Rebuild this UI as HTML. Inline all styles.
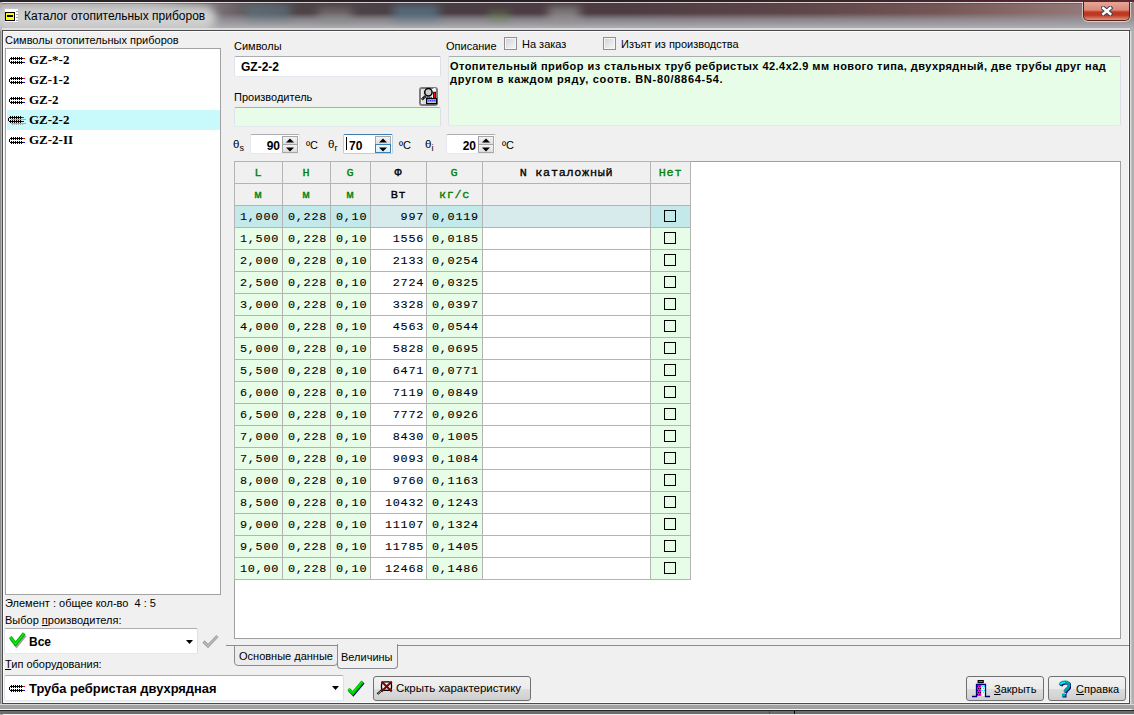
<!DOCTYPE html>
<html><head><meta charset="utf-8">
<style>
*{box-sizing:border-box;margin:0;padding:0}
html,body{width:1134px;height:715px;overflow:hidden;background:#a6a6a8}
body{position:relative;font-family:"Liberation Sans",sans-serif;font-size:11px;color:#000}
.a{position:absolute}
.t{position:absolute;white-space:pre;line-height:13px}
#title{left:0;top:0;width:1134px;height:31px;
 background:linear-gradient(90deg,#a89ea2 0px,#a8a6a8 60px,#a4a2a4 150px,#7a7276 215px,#5e565a 250px,#4e4448 300px,#4a3e44 450px,#4d3c42 620px,#5e464a 800px,#745656 940px,#8c6e6e 1040px,#9a8686 1134px)}
#titleshade{left:0;top:0;width:1134px;height:31px;
 background:linear-gradient(180deg,rgba(150,150,155,0) 0px,rgba(150,150,155,0) 13px,rgba(150,150,156,.75) 19px,rgba(165,165,170,.95) 25px,rgba(175,175,178,1) 28px)}
#client{left:2px;top:30px;width:1128px;height:674px;background:#f0f0f0;border:1px solid #4a4a4a;box-shadow:inset 1px 1px 0 #fcfcfc,inset -1px -1px 0 #fcfcfc}
.box{position:absolute;background:#fff;border:1px solid;border-color:#abadb3 #dbdfe6 #e3e9ef #e2e3ea;border-radius:2px}
.grn{background:#e8fde8}
.chk{position:absolute;width:13px;height:13px;border:1px solid #8f8f8f;box-shadow:inset 0 0 0 1px #f6f6f6;background:linear-gradient(135deg,#cfd2d6,#f8f8f8)}
.spin{position:absolute;background:#fff;border:1px solid #abadb3;font-weight:bold;font-size:12px}
.gl{background:#b4b4b4}
.tc{position:absolute;height:22px;line-height:22px;padding-top:1px;text-align:center;font-family:"Liberation Mono",monospace;font-weight:normal;-webkit-text-stroke:0.35px currentColor;font-size:11.8px;letter-spacing:0.72px;white-space:pre}
.td{position:absolute;height:22px;line-height:22px;padding-top:1px;font-family:"Liberation Mono",monospace;font-weight:normal;-webkit-text-stroke:0.1px #000;font-size:11.8px;letter-spacing:0.72px;white-space:pre}
</style></head><body>
<div id="title" class="a"></div>
<div id="titleshade" class="a"></div>
<div class="a" style="left:246px;top:5px;width:44px;height:13px;background:#5d7a88;filter:blur(5px);opacity:.65"></div>
<div class="a" style="left:318px;top:9px;width:34px;height:14px;background:#909090;filter:blur(5px);opacity:.6"></div>
<div class="a" style="left:393px;top:5px;width:46px;height:15px;background:#5a7e92;filter:blur(5px);opacity:.7"></div>
<div class="a" style="left:488px;top:12px;width:22px;height:8px;background:#6a8a50;filter:blur(4px);opacity:.6"></div>
<div class="a" style="left:548px;top:7px;width:32px;height:15px;background:#9a9a9a;filter:blur(5px);opacity:.7"></div>
<div class="a" style="left:-6px;top:6px;width:222px;height:24px;border-radius:12px;background:#d0d0d0;filter:blur(4px)"></div>
<div class="a" style="left:0;top:0;width:1134px;height:2px;background:linear-gradient(90deg,#2a2228,#2a1e24 600px,#5a2a30 1134px)"></div>
<div class="a" style="left:2px;top:2px;width:1130px;height:1px;background:rgba(255,255,255,.75)"></div>
<div class="a" style="left:2px;top:3px;width:1130px;height:1px;background:rgba(60,60,60,.35)"></div>
<div class="a" style="left:2px;top:28px;width:1128px;height:2px;background:rgba(230,230,232,.8)"></div>
<div class="a" style="left:0;top:31px;width:2px;height:680px;background:linear-gradient(90deg,#8e8e8e 0,#8e8e8e 1px,#b8b8b8 1px)"></div>
<div class="a" style="left:1130px;top:31px;width:4px;height:680px;background:linear-gradient(90deg,#dcdcdc 0,#dcdcdc 1px,#c0c0c0 1px,#c0c0c0 2px,#b0b0b0 2px)"></div>
<div class="a" style="left:0;top:704px;width:1134px;height:5px;background:linear-gradient(180deg,#d8d8d8 0,#d8d8d8 1px,#a2a2a2 1px,#a0a0a0 5px)"></div>
<div class="a" style="left:0;top:709px;width:1132px;height:1px;background:#f4f4f4"></div>
<div class="a" style="left:0;top:710px;width:1134px;height:1px;background:#262626"></div>
<div class="a" style="left:0;top:711px;width:1134px;height:3px;background:#6c6c6c"></div>
<div class="a" style="left:769px;top:711px;width:1px;height:3px;background:#505050"></div>
<div class="a" style="left:794px;top:711px;width:1px;height:3px;background:#000"></div>
<div class="a" style="left:3px;top:714px;width:1131px;height:1px;background:#f0f0f0"></div>
<div id="client" class="a"></div>

<!-- title icon -->
<div class="a" style="left:4px;top:8px;width:15px;height:15px;background:#fff;border:1px solid #c8c8c8;border-radius:1px"></div>
<div class="a" style="left:5px;top:12px;width:10px;height:9px;background:#ffff00;border:1px solid #000"></div>
<div class="a" style="left:7px;top:15px;width:6px;height:2px;background:#000"></div>
<div class="a" style="left:16px;top:11px;width:2px;height:10px;background:repeating-linear-gradient(180deg,#a0a0a0 0,#a0a0a0 1px,#fff 1px,#fff 3px)"></div>
<div class="t" style="left:24px;top:9px;font-size:12px;line-height:14px;color:#000">Каталог отопительных приборов</div>

<!-- close button -->
<div class="a" style="left:1082px;top:2px;width:49px;height:20px;border-radius:0 0 6px 6px;background:rgba(255,255,255,.55)"></div>
<div class="a" style="left:1083px;top:2px;width:47px;height:19px;border:1px solid #5a1f18;border-top:none;border-radius:0 0 5px 5px;background:linear-gradient(180deg,#e9a596 0px,#d88a7a 8px,#c4391e 10px,#b83820 13px,#d07058 16px,#e09680 18px)"></div>
<svg class="a" style="left:1101px;top:6px" width="12" height="10">
 <path d="M2.2 2 L9.3 8 M9.3 2 L2.2 8" stroke="#3a4258" stroke-width="4.4" stroke-linecap="square"/>
 <path d="M2.2 2 L9.3 8 M9.3 2 L2.2 8" stroke="#ffffff" stroke-width="2.4" stroke-linecap="square"/>
</svg>

<!-- left panel -->
<div class="t" style="left:5px;top:34px">Символы отопительных приборов</div>
<div class="box" style="left:5px;top:48px;width:216px;height:547px;border-color:#a2a2a2;border-radius:0"></div>
<div class="a" style="left:7px;top:110px;width:213px;height:20px;background:#c8fafc"></div>

<!-- list -->
<svg width="0" height="0" style="position:absolute"><defs><symbol id="pipe" viewBox="0 0 16 7"><rect x="2" y="0" width="1" height="1" fill="#000"/><rect x="2" y="2" width="1" height="1" fill="#000"/><rect x="2" y="4" width="1" height="1" fill="#000"/><rect x="2" y="6" width="1" height="1" fill="#000"/><rect x="4" y="0" width="1" height="1" fill="#000"/><rect x="4" y="2" width="1" height="1" fill="#000"/><rect x="4" y="4" width="1" height="1" fill="#000"/><rect x="4" y="6" width="1" height="1" fill="#000"/><rect x="6" y="0" width="1" height="1" fill="#000"/><rect x="6" y="2" width="1" height="1" fill="#000"/><rect x="6" y="4" width="1" height="1" fill="#000"/><rect x="6" y="6" width="1" height="1" fill="#000"/><rect x="8" y="0" width="1" height="1" fill="#000"/><rect x="8" y="2" width="1" height="1" fill="#000"/><rect x="8" y="4" width="1" height="1" fill="#000"/><rect x="8" y="6" width="1" height="1" fill="#000"/><rect x="10" y="0" width="1" height="1" fill="#000"/><rect x="10" y="2" width="1" height="1" fill="#000"/><rect x="10" y="4" width="1" height="1" fill="#000"/><rect x="10" y="6" width="1" height="1" fill="#000"/><rect x="12" y="0" width="1" height="1" fill="#000"/><rect x="12" y="2" width="1" height="1" fill="#000"/><rect x="12" y="4" width="1" height="1" fill="#000"/><rect x="12" y="6" width="1" height="1" fill="#000"/><rect x="1" y="1" width="13" height="1" fill="#000"/><rect x="1" y="5" width="13" height="1" fill="#000"/><rect x="0" y="2" width="1" height="3" fill="#000"/><rect x="14" y="1" width="2" height="1" fill="#ff0000"/><rect x="14" y="5" width="2" height="1" fill="#0000ff"/></symbol></defs></svg>
<svg class="a" style="left:9px;top:57px" width="16" height="7"><use href="#pipe"/></svg>
<div class="t" style="left:29px;top:50px;line-height:20px;font-family:'Liberation Serif',serif;font-weight:bold;font-size:13px">GZ-*-2</div>
<svg class="a" style="left:9px;top:77px" width="16" height="7"><use href="#pipe"/></svg>
<div class="t" style="left:29px;top:70px;line-height:20px;font-family:'Liberation Serif',serif;font-weight:bold;font-size:13px">GZ-1-2</div>
<svg class="a" style="left:9px;top:97px" width="16" height="7"><use href="#pipe"/></svg>
<div class="t" style="left:29px;top:90px;line-height:20px;font-family:'Liberation Serif',serif;font-weight:bold;font-size:13px">GZ-2</div>
<svg class="a" style="left:10px;top:118px" width="16" height="7"><g fill="#a8a8a8"><rect x="1" y="1" width="15" height="1"/><rect x="1" y="5" width="15" height="1"/><rect x="2" y="6" width="1" height="1"/><rect x="4" y="6" width="1" height="1"/><rect x="6" y="6" width="1" height="1"/><rect x="8" y="6" width="1" height="1"/><rect x="10" y="6" width="1" height="1"/><rect x="12" y="6" width="1" height="1"/></g></svg>
<svg class="a" style="left:8px;top:116px" width="16" height="7"><use href="#pipe"/></svg>
<div class="t" style="left:29px;top:110px;line-height:20px;font-family:'Liberation Serif',serif;font-weight:bold;font-size:13px">GZ-2-2</div>
<svg class="a" style="left:9px;top:137px" width="16" height="7"><use href="#pipe"/></svg>
<div class="t" style="left:29px;top:130px;line-height:20px;font-family:'Liberation Serif',serif;font-weight:bold;font-size:13px">GZ-2-II</div>
<!-- /list -->
<div class="t" style="left:5px;top:597px">Элемент : общее кол-во  4 : 5</div>
<div class="t" style="left:5px;top:614px">Выбор <u>п</u>роизводителя:</div>
<div class="box" style="left:4px;top:628px;width:194px;height:26px"></div>
<div class="t" style="left:29px;top:636px;font-weight:bold;font-size:12px">Все</div>
<div class="t" style="left:5px;top:658px"><u>Т</u>ип оборудования:</div>
<div class="box" style="left:4px;top:675px;width:340px;height:26px"></div>
<div class="t" style="left:29px;top:682px;font-weight:bold;font-size:12.9px">Труба ребристая двухрядная</div>

<!-- top right -->
<div class="t" style="left:234px;top:40px">Символы</div>
<div class="box" style="left:234px;top:56px;width:207px;height:21px"></div>
<div class="t" style="left:241px;top:61px;font-weight:bold;font-size:12px">GZ-2-2</div>
<div class="t" style="left:234px;top:91px">Производитель</div>
<div class="box grn" style="left:234px;top:107px;width:207px;height:20px"></div>

<div class="t" style="left:446px;top:40px">Описание</div>
<div class="chk" style="left:504px;top:37px"></div>
<div class="t" style="left:522px;top:38px">На заказ</div>
<div class="chk" style="left:603px;top:37px"></div>
<div class="t" style="left:621px;top:38px">Изъят из производства</div>
<div class="box grn" style="left:448px;top:56px;width:673px;height:70px"></div>
<div class="t" style="left:450px;top:60px;font-weight:bold;letter-spacing:0.45px">Отопительный прибор из стальных труб ребристых 42.4x2.9 мм нового типа, двухрядный, две трубы друг над</div>
<div class="t" style="left:450px;top:73px;font-weight:bold;letter-spacing:0.7px">другом в каждом ряду, соотв. BN-80/8864-54.</div>

<!-- grid panel -->
<div class="box" style="left:234px;top:161px;width:887px;height:478px;border-color:#a0a0a0;border-radius:0"></div>

<!-- spin -->
<div class="t" style="left:233px;top:137.5px;font-size:11.5px">θ<span style="font-size:9px;position:relative;top:3px">s</span></div>
<div class="a" style="left:250px;top:134px;width:50px;height:20px;background:#fff;border:1px solid #e3e9ef;border-top-color:#abadb3;border-radius:2px"></div>
<div class="a" style="left:282px;top:136px;width:16px;height:9px;border:1px solid #a6a6a6;background:linear-gradient(180deg,#f4f4f4,#dedede)"></div>
<div class="a" style="left:282px;top:144px;width:16px;height:9px;border:1px solid #a6a6a6;background:linear-gradient(180deg,#f4f4f4,#dedede)"></div>
<svg class="a" style="left:286px;top:138px" width="8" height="5"><path d="M0 4.5 L4 0.5 L8 4.5Z" fill="#000"/></svg>
<svg class="a" style="left:286px;top:146.5px" width="8" height="5"><path d="M0 0.5 L4 4.5 L8 0.5Z" fill="#000"/></svg>
<div class="t" style="left:250px;top:138.5px;width:30px;text-align:right;font-weight:bold;font-size:12px;line-height:14px">90</div>
<div class="t" style="left:306px;top:139px;font-size:11px">ºC</div>
<div class="t" style="left:328px;top:137.5px;font-size:11.5px">θ<span style="font-size:9px;position:relative;top:3px">r</span></div>
<div class="a" style="left:343px;top:134px;width:50px;height:20px;background:#fff;border:1px solid #b5cfe7;border-top-color:#3d7bad;border-radius:2px"></div>
<div class="a" style="left:375px;top:136px;width:16px;height:9px;border:1px solid #a6a6a6;background:linear-gradient(180deg,#f4f4f4,#dedede)"></div>
<div class="a" style="left:375px;top:144px;width:16px;height:9px;border:1px solid #3c7fb1;background:linear-gradient(180deg,#eaf6fd,#d9f0fc)"></div>
<svg class="a" style="left:379px;top:138px" width="8" height="5"><path d="M0 4.5 L4 0.5 L8 4.5Z" fill="#000"/></svg>
<svg class="a" style="left:379px;top:146.5px" width="8" height="5"><path d="M0 0.5 L4 4.5 L8 0.5Z" fill="#000"/></svg>
<div class="t" style="left:349px;top:138.5px;font-weight:bold;font-size:12px;line-height:14px">70</div>
<div class="a" style="left:346px;top:137px;width:1px;height:13px;background:#000"></div>
<div class="t" style="left:399px;top:139px;font-size:11px">ºC</div>
<div class="t" style="left:425px;top:137.5px;font-size:11.5px">θ<span style="font-size:9px;position:relative;top:3px">i</span></div>
<div class="a" style="left:446px;top:134px;width:50px;height:20px;background:#fff;border:1px solid #e3e9ef;border-top-color:#abadb3;border-radius:2px"></div>
<div class="a" style="left:478px;top:136px;width:16px;height:9px;border:1px solid #a6a6a6;background:linear-gradient(180deg,#f4f4f4,#dedede)"></div>
<div class="a" style="left:478px;top:144px;width:16px;height:9px;border:1px solid #a6a6a6;background:linear-gradient(180deg,#f4f4f4,#dedede)"></div>
<svg class="a" style="left:482px;top:138px" width="8" height="5"><path d="M0 4.5 L4 0.5 L8 4.5Z" fill="#000"/></svg>
<svg class="a" style="left:482px;top:146.5px" width="8" height="5"><path d="M0 0.5 L4 4.5 L8 0.5Z" fill="#000"/></svg>
<div class="t" style="left:446px;top:138.5px;width:30px;text-align:right;font-weight:bold;font-size:12px;line-height:14px">20</div>
<div class="t" style="left:502px;top:139px;font-size:11px">ºC</div>
<!-- /spin -->

<!-- table -->
<div class="a" style="left:234px;top:161px;width:48px;height:44px;background:#f0f0f0"></div>
<div class="a" style="left:282px;top:161px;width:48px;height:44px;background:#f0f0f0"></div>
<div class="a" style="left:330px;top:161px;width:40px;height:44px;background:#f0f0f0"></div>
<div class="a" style="left:370px;top:161px;width:56px;height:44px;background:#f0f0f0"></div>
<div class="a" style="left:426px;top:161px;width:56px;height:44px;background:#f0f0f0"></div>
<div class="a" style="left:482px;top:161px;width:168px;height:44px;background:#f0f0f0"></div>
<div class="a" style="left:650px;top:161px;width:40px;height:44px;background:#f0f0f0"></div>
<div class="a" style="left:234px;top:205px;width:48px;height:22px;background:#c4e9eb"></div>
<div class="a" style="left:282px;top:205px;width:48px;height:22px;background:#c4e9eb"></div>
<div class="a" style="left:330px;top:205px;width:40px;height:22px;background:#c4e9eb"></div>
<div class="a" style="left:370px;top:205px;width:56px;height:22px;background:#d7ebed"></div>
<div class="a" style="left:426px;top:205px;width:56px;height:22px;background:#c4e9eb"></div>
<div class="a" style="left:482px;top:205px;width:168px;height:22px;background:#d7ebed"></div>
<div class="a" style="left:650px;top:205px;width:40px;height:22px;background:#c4e9eb"></div>
<div class="a" style="left:234px;top:227px;width:48px;height:22px;background:#e8fde8"></div>
<div class="a" style="left:282px;top:227px;width:48px;height:22px;background:#e8fde8"></div>
<div class="a" style="left:330px;top:227px;width:40px;height:22px;background:#e8fde8"></div>
<div class="a" style="left:370px;top:227px;width:56px;height:22px;background:#ffffff"></div>
<div class="a" style="left:426px;top:227px;width:56px;height:22px;background:#e8fde8"></div>
<div class="a" style="left:482px;top:227px;width:168px;height:22px;background:#ffffff"></div>
<div class="a" style="left:650px;top:227px;width:40px;height:22px;background:#e8fde8"></div>
<div class="a" style="left:234px;top:249px;width:48px;height:22px;background:#e8fde8"></div>
<div class="a" style="left:282px;top:249px;width:48px;height:22px;background:#e8fde8"></div>
<div class="a" style="left:330px;top:249px;width:40px;height:22px;background:#e8fde8"></div>
<div class="a" style="left:370px;top:249px;width:56px;height:22px;background:#ffffff"></div>
<div class="a" style="left:426px;top:249px;width:56px;height:22px;background:#e8fde8"></div>
<div class="a" style="left:482px;top:249px;width:168px;height:22px;background:#ffffff"></div>
<div class="a" style="left:650px;top:249px;width:40px;height:22px;background:#e8fde8"></div>
<div class="a" style="left:234px;top:271px;width:48px;height:22px;background:#e8fde8"></div>
<div class="a" style="left:282px;top:271px;width:48px;height:22px;background:#e8fde8"></div>
<div class="a" style="left:330px;top:271px;width:40px;height:22px;background:#e8fde8"></div>
<div class="a" style="left:370px;top:271px;width:56px;height:22px;background:#ffffff"></div>
<div class="a" style="left:426px;top:271px;width:56px;height:22px;background:#e8fde8"></div>
<div class="a" style="left:482px;top:271px;width:168px;height:22px;background:#ffffff"></div>
<div class="a" style="left:650px;top:271px;width:40px;height:22px;background:#e8fde8"></div>
<div class="a" style="left:234px;top:293px;width:48px;height:22px;background:#e8fde8"></div>
<div class="a" style="left:282px;top:293px;width:48px;height:22px;background:#e8fde8"></div>
<div class="a" style="left:330px;top:293px;width:40px;height:22px;background:#e8fde8"></div>
<div class="a" style="left:370px;top:293px;width:56px;height:22px;background:#ffffff"></div>
<div class="a" style="left:426px;top:293px;width:56px;height:22px;background:#e8fde8"></div>
<div class="a" style="left:482px;top:293px;width:168px;height:22px;background:#ffffff"></div>
<div class="a" style="left:650px;top:293px;width:40px;height:22px;background:#e8fde8"></div>
<div class="a" style="left:234px;top:315px;width:48px;height:22px;background:#e8fde8"></div>
<div class="a" style="left:282px;top:315px;width:48px;height:22px;background:#e8fde8"></div>
<div class="a" style="left:330px;top:315px;width:40px;height:22px;background:#e8fde8"></div>
<div class="a" style="left:370px;top:315px;width:56px;height:22px;background:#ffffff"></div>
<div class="a" style="left:426px;top:315px;width:56px;height:22px;background:#e8fde8"></div>
<div class="a" style="left:482px;top:315px;width:168px;height:22px;background:#ffffff"></div>
<div class="a" style="left:650px;top:315px;width:40px;height:22px;background:#e8fde8"></div>
<div class="a" style="left:234px;top:337px;width:48px;height:22px;background:#e8fde8"></div>
<div class="a" style="left:282px;top:337px;width:48px;height:22px;background:#e8fde8"></div>
<div class="a" style="left:330px;top:337px;width:40px;height:22px;background:#e8fde8"></div>
<div class="a" style="left:370px;top:337px;width:56px;height:22px;background:#ffffff"></div>
<div class="a" style="left:426px;top:337px;width:56px;height:22px;background:#e8fde8"></div>
<div class="a" style="left:482px;top:337px;width:168px;height:22px;background:#ffffff"></div>
<div class="a" style="left:650px;top:337px;width:40px;height:22px;background:#e8fde8"></div>
<div class="a" style="left:234px;top:359px;width:48px;height:22px;background:#e8fde8"></div>
<div class="a" style="left:282px;top:359px;width:48px;height:22px;background:#e8fde8"></div>
<div class="a" style="left:330px;top:359px;width:40px;height:22px;background:#e8fde8"></div>
<div class="a" style="left:370px;top:359px;width:56px;height:22px;background:#ffffff"></div>
<div class="a" style="left:426px;top:359px;width:56px;height:22px;background:#e8fde8"></div>
<div class="a" style="left:482px;top:359px;width:168px;height:22px;background:#ffffff"></div>
<div class="a" style="left:650px;top:359px;width:40px;height:22px;background:#e8fde8"></div>
<div class="a" style="left:234px;top:381px;width:48px;height:22px;background:#e8fde8"></div>
<div class="a" style="left:282px;top:381px;width:48px;height:22px;background:#e8fde8"></div>
<div class="a" style="left:330px;top:381px;width:40px;height:22px;background:#e8fde8"></div>
<div class="a" style="left:370px;top:381px;width:56px;height:22px;background:#ffffff"></div>
<div class="a" style="left:426px;top:381px;width:56px;height:22px;background:#e8fde8"></div>
<div class="a" style="left:482px;top:381px;width:168px;height:22px;background:#ffffff"></div>
<div class="a" style="left:650px;top:381px;width:40px;height:22px;background:#e8fde8"></div>
<div class="a" style="left:234px;top:403px;width:48px;height:22px;background:#e8fde8"></div>
<div class="a" style="left:282px;top:403px;width:48px;height:22px;background:#e8fde8"></div>
<div class="a" style="left:330px;top:403px;width:40px;height:22px;background:#e8fde8"></div>
<div class="a" style="left:370px;top:403px;width:56px;height:22px;background:#ffffff"></div>
<div class="a" style="left:426px;top:403px;width:56px;height:22px;background:#e8fde8"></div>
<div class="a" style="left:482px;top:403px;width:168px;height:22px;background:#ffffff"></div>
<div class="a" style="left:650px;top:403px;width:40px;height:22px;background:#e8fde8"></div>
<div class="a" style="left:234px;top:425px;width:48px;height:22px;background:#e8fde8"></div>
<div class="a" style="left:282px;top:425px;width:48px;height:22px;background:#e8fde8"></div>
<div class="a" style="left:330px;top:425px;width:40px;height:22px;background:#e8fde8"></div>
<div class="a" style="left:370px;top:425px;width:56px;height:22px;background:#ffffff"></div>
<div class="a" style="left:426px;top:425px;width:56px;height:22px;background:#e8fde8"></div>
<div class="a" style="left:482px;top:425px;width:168px;height:22px;background:#ffffff"></div>
<div class="a" style="left:650px;top:425px;width:40px;height:22px;background:#e8fde8"></div>
<div class="a" style="left:234px;top:447px;width:48px;height:22px;background:#e8fde8"></div>
<div class="a" style="left:282px;top:447px;width:48px;height:22px;background:#e8fde8"></div>
<div class="a" style="left:330px;top:447px;width:40px;height:22px;background:#e8fde8"></div>
<div class="a" style="left:370px;top:447px;width:56px;height:22px;background:#ffffff"></div>
<div class="a" style="left:426px;top:447px;width:56px;height:22px;background:#e8fde8"></div>
<div class="a" style="left:482px;top:447px;width:168px;height:22px;background:#ffffff"></div>
<div class="a" style="left:650px;top:447px;width:40px;height:22px;background:#e8fde8"></div>
<div class="a" style="left:234px;top:469px;width:48px;height:22px;background:#e8fde8"></div>
<div class="a" style="left:282px;top:469px;width:48px;height:22px;background:#e8fde8"></div>
<div class="a" style="left:330px;top:469px;width:40px;height:22px;background:#e8fde8"></div>
<div class="a" style="left:370px;top:469px;width:56px;height:22px;background:#ffffff"></div>
<div class="a" style="left:426px;top:469px;width:56px;height:22px;background:#e8fde8"></div>
<div class="a" style="left:482px;top:469px;width:168px;height:22px;background:#ffffff"></div>
<div class="a" style="left:650px;top:469px;width:40px;height:22px;background:#e8fde8"></div>
<div class="a" style="left:234px;top:491px;width:48px;height:22px;background:#e8fde8"></div>
<div class="a" style="left:282px;top:491px;width:48px;height:22px;background:#e8fde8"></div>
<div class="a" style="left:330px;top:491px;width:40px;height:22px;background:#e8fde8"></div>
<div class="a" style="left:370px;top:491px;width:56px;height:22px;background:#ffffff"></div>
<div class="a" style="left:426px;top:491px;width:56px;height:22px;background:#e8fde8"></div>
<div class="a" style="left:482px;top:491px;width:168px;height:22px;background:#ffffff"></div>
<div class="a" style="left:650px;top:491px;width:40px;height:22px;background:#e8fde8"></div>
<div class="a" style="left:234px;top:513px;width:48px;height:22px;background:#e8fde8"></div>
<div class="a" style="left:282px;top:513px;width:48px;height:22px;background:#e8fde8"></div>
<div class="a" style="left:330px;top:513px;width:40px;height:22px;background:#e8fde8"></div>
<div class="a" style="left:370px;top:513px;width:56px;height:22px;background:#ffffff"></div>
<div class="a" style="left:426px;top:513px;width:56px;height:22px;background:#e8fde8"></div>
<div class="a" style="left:482px;top:513px;width:168px;height:22px;background:#ffffff"></div>
<div class="a" style="left:650px;top:513px;width:40px;height:22px;background:#e8fde8"></div>
<div class="a" style="left:234px;top:535px;width:48px;height:22px;background:#e8fde8"></div>
<div class="a" style="left:282px;top:535px;width:48px;height:22px;background:#e8fde8"></div>
<div class="a" style="left:330px;top:535px;width:40px;height:22px;background:#e8fde8"></div>
<div class="a" style="left:370px;top:535px;width:56px;height:22px;background:#ffffff"></div>
<div class="a" style="left:426px;top:535px;width:56px;height:22px;background:#e8fde8"></div>
<div class="a" style="left:482px;top:535px;width:168px;height:22px;background:#ffffff"></div>
<div class="a" style="left:650px;top:535px;width:40px;height:22px;background:#e8fde8"></div>
<div class="a" style="left:234px;top:557px;width:48px;height:22px;background:#e8fde8"></div>
<div class="a" style="left:282px;top:557px;width:48px;height:22px;background:#e8fde8"></div>
<div class="a" style="left:330px;top:557px;width:40px;height:22px;background:#e8fde8"></div>
<div class="a" style="left:370px;top:557px;width:56px;height:22px;background:#ffffff"></div>
<div class="a" style="left:426px;top:557px;width:56px;height:22px;background:#e8fde8"></div>
<div class="a" style="left:482px;top:557px;width:168px;height:22px;background:#ffffff"></div>
<div class="a" style="left:650px;top:557px;width:40px;height:22px;background:#e8fde8"></div>
<div class="a gl" style="left:234px;top:161px;width:1px;height:419px"></div>
<div class="a gl" style="left:282px;top:161px;width:1px;height:419px"></div>
<div class="a gl" style="left:330px;top:161px;width:1px;height:419px"></div>
<div class="a gl" style="left:370px;top:161px;width:1px;height:419px"></div>
<div class="a gl" style="left:426px;top:161px;width:1px;height:419px"></div>
<div class="a gl" style="left:482px;top:161px;width:1px;height:419px"></div>
<div class="a gl" style="left:650px;top:161px;width:1px;height:419px"></div>
<div class="a gl" style="left:690px;top:161px;width:1px;height:419px"></div>
<div class="a gl" style="left:234px;top:161px;width:457px;height:1px"></div>
<div class="a gl" style="left:234px;top:183px;width:457px;height:1px"></div>
<div class="a gl" style="left:234px;top:205px;width:457px;height:1px"></div>
<div class="a gl" style="left:234px;top:227px;width:457px;height:1px"></div>
<div class="a gl" style="left:234px;top:249px;width:457px;height:1px"></div>
<div class="a gl" style="left:234px;top:271px;width:457px;height:1px"></div>
<div class="a gl" style="left:234px;top:293px;width:457px;height:1px"></div>
<div class="a gl" style="left:234px;top:315px;width:457px;height:1px"></div>
<div class="a gl" style="left:234px;top:337px;width:457px;height:1px"></div>
<div class="a gl" style="left:234px;top:359px;width:457px;height:1px"></div>
<div class="a gl" style="left:234px;top:381px;width:457px;height:1px"></div>
<div class="a gl" style="left:234px;top:403px;width:457px;height:1px"></div>
<div class="a gl" style="left:234px;top:425px;width:457px;height:1px"></div>
<div class="a gl" style="left:234px;top:447px;width:457px;height:1px"></div>
<div class="a gl" style="left:234px;top:469px;width:457px;height:1px"></div>
<div class="a gl" style="left:234px;top:491px;width:457px;height:1px"></div>
<div class="a gl" style="left:234px;top:513px;width:457px;height:1px"></div>
<div class="a gl" style="left:234px;top:535px;width:457px;height:1px"></div>
<div class="a gl" style="left:234px;top:557px;width:457px;height:1px"></div>
<div class="a gl" style="left:234px;top:579px;width:457px;height:1px"></div>
<div class="tc" style="left:235px;top:161px;width:47px;color:#008000">L</div>
<div class="tc" style="left:283px;top:161px;width:47px;color:#008000">H</div>
<div class="tc" style="left:331px;top:161px;width:39px;color:#008000">G</div>
<div class="tc" style="left:371px;top:161px;width:55px;color:#000">Ф</div>
<div class="tc" style="left:427px;top:161px;width:55px;color:#008000">G</div>
<div class="tc" style="left:483px;top:161px;width:167px;color:#000">N каталожный</div>
<div class="tc" style="left:651px;top:161px;width:39px;color:#008000">Нет</div>
<div class="tc" style="left:235px;top:183px;width:47px;color:#008000">м</div>
<div class="tc" style="left:283px;top:183px;width:47px;color:#008000">м</div>
<div class="tc" style="left:331px;top:183px;width:39px;color:#008000">м</div>
<div class="tc" style="left:371px;top:183px;width:55px;color:#000">Вт</div>
<div class="tc" style="left:427px;top:183px;width:55px;color:#008000">кг/с</div>
<div class="td" style="left:240px;top:205px">1,000</div>
<div class="td" style="left:288px;top:205px">0,228</div>
<div class="td" style="left:336px;top:205px">0,10</div>
<div class="td" style="left:371px;top:205px;width:53px;text-align:right">997</div>
<div class="td" style="left:432px;top:205px">0,0119</div>
<div class="a" style="left:664px;top:210px;width:12px;height:12px;border:1px solid #000"></div>
<div class="td" style="left:240px;top:227px">1,500</div>
<div class="td" style="left:288px;top:227px">0,228</div>
<div class="td" style="left:336px;top:227px">0,10</div>
<div class="td" style="left:371px;top:227px;width:53px;text-align:right">1556</div>
<div class="td" style="left:432px;top:227px">0,0185</div>
<div class="a" style="left:664px;top:232px;width:12px;height:12px;border:1px solid #000"></div>
<div class="td" style="left:240px;top:249px">2,000</div>
<div class="td" style="left:288px;top:249px">0,228</div>
<div class="td" style="left:336px;top:249px">0,10</div>
<div class="td" style="left:371px;top:249px;width:53px;text-align:right">2133</div>
<div class="td" style="left:432px;top:249px">0,0254</div>
<div class="a" style="left:664px;top:254px;width:12px;height:12px;border:1px solid #000"></div>
<div class="td" style="left:240px;top:271px">2,500</div>
<div class="td" style="left:288px;top:271px">0,228</div>
<div class="td" style="left:336px;top:271px">0,10</div>
<div class="td" style="left:371px;top:271px;width:53px;text-align:right">2724</div>
<div class="td" style="left:432px;top:271px">0,0325</div>
<div class="a" style="left:664px;top:276px;width:12px;height:12px;border:1px solid #000"></div>
<div class="td" style="left:240px;top:293px">3,000</div>
<div class="td" style="left:288px;top:293px">0,228</div>
<div class="td" style="left:336px;top:293px">0,10</div>
<div class="td" style="left:371px;top:293px;width:53px;text-align:right">3328</div>
<div class="td" style="left:432px;top:293px">0,0397</div>
<div class="a" style="left:664px;top:298px;width:12px;height:12px;border:1px solid #000"></div>
<div class="td" style="left:240px;top:315px">4,000</div>
<div class="td" style="left:288px;top:315px">0,228</div>
<div class="td" style="left:336px;top:315px">0,10</div>
<div class="td" style="left:371px;top:315px;width:53px;text-align:right">4563</div>
<div class="td" style="left:432px;top:315px">0,0544</div>
<div class="a" style="left:664px;top:320px;width:12px;height:12px;border:1px solid #000"></div>
<div class="td" style="left:240px;top:337px">5,000</div>
<div class="td" style="left:288px;top:337px">0,228</div>
<div class="td" style="left:336px;top:337px">0,10</div>
<div class="td" style="left:371px;top:337px;width:53px;text-align:right">5828</div>
<div class="td" style="left:432px;top:337px">0,0695</div>
<div class="a" style="left:664px;top:342px;width:12px;height:12px;border:1px solid #000"></div>
<div class="td" style="left:240px;top:359px">5,500</div>
<div class="td" style="left:288px;top:359px">0,228</div>
<div class="td" style="left:336px;top:359px">0,10</div>
<div class="td" style="left:371px;top:359px;width:53px;text-align:right">6471</div>
<div class="td" style="left:432px;top:359px">0,0771</div>
<div class="a" style="left:664px;top:364px;width:12px;height:12px;border:1px solid #000"></div>
<div class="td" style="left:240px;top:381px">6,000</div>
<div class="td" style="left:288px;top:381px">0,228</div>
<div class="td" style="left:336px;top:381px">0,10</div>
<div class="td" style="left:371px;top:381px;width:53px;text-align:right">7119</div>
<div class="td" style="left:432px;top:381px">0,0849</div>
<div class="a" style="left:664px;top:386px;width:12px;height:12px;border:1px solid #000"></div>
<div class="td" style="left:240px;top:403px">6,500</div>
<div class="td" style="left:288px;top:403px">0,228</div>
<div class="td" style="left:336px;top:403px">0,10</div>
<div class="td" style="left:371px;top:403px;width:53px;text-align:right">7772</div>
<div class="td" style="left:432px;top:403px">0,0926</div>
<div class="a" style="left:664px;top:408px;width:12px;height:12px;border:1px solid #000"></div>
<div class="td" style="left:240px;top:425px">7,000</div>
<div class="td" style="left:288px;top:425px">0,228</div>
<div class="td" style="left:336px;top:425px">0,10</div>
<div class="td" style="left:371px;top:425px;width:53px;text-align:right">8430</div>
<div class="td" style="left:432px;top:425px">0,1005</div>
<div class="a" style="left:664px;top:430px;width:12px;height:12px;border:1px solid #000"></div>
<div class="td" style="left:240px;top:447px">7,500</div>
<div class="td" style="left:288px;top:447px">0,228</div>
<div class="td" style="left:336px;top:447px">0,10</div>
<div class="td" style="left:371px;top:447px;width:53px;text-align:right">9093</div>
<div class="td" style="left:432px;top:447px">0,1084</div>
<div class="a" style="left:664px;top:452px;width:12px;height:12px;border:1px solid #000"></div>
<div class="td" style="left:240px;top:469px">8,000</div>
<div class="td" style="left:288px;top:469px">0,228</div>
<div class="td" style="left:336px;top:469px">0,10</div>
<div class="td" style="left:371px;top:469px;width:53px;text-align:right">9760</div>
<div class="td" style="left:432px;top:469px">0,1163</div>
<div class="a" style="left:664px;top:474px;width:12px;height:12px;border:1px solid #000"></div>
<div class="td" style="left:240px;top:491px">8,500</div>
<div class="td" style="left:288px;top:491px">0,228</div>
<div class="td" style="left:336px;top:491px">0,10</div>
<div class="td" style="left:371px;top:491px;width:53px;text-align:right">10432</div>
<div class="td" style="left:432px;top:491px">0,1243</div>
<div class="a" style="left:664px;top:496px;width:12px;height:12px;border:1px solid #000"></div>
<div class="td" style="left:240px;top:513px">9,000</div>
<div class="td" style="left:288px;top:513px">0,228</div>
<div class="td" style="left:336px;top:513px">0,10</div>
<div class="td" style="left:371px;top:513px;width:53px;text-align:right">11107</div>
<div class="td" style="left:432px;top:513px">0,1324</div>
<div class="a" style="left:664px;top:518px;width:12px;height:12px;border:1px solid #000"></div>
<div class="td" style="left:240px;top:535px">9,500</div>
<div class="td" style="left:288px;top:535px">0,228</div>
<div class="td" style="left:336px;top:535px">0,10</div>
<div class="td" style="left:371px;top:535px;width:53px;text-align:right">11785</div>
<div class="td" style="left:432px;top:535px">0,1405</div>
<div class="a" style="left:664px;top:540px;width:12px;height:12px;border:1px solid #000"></div>
<div class="td" style="left:240px;top:557px">10,00</div>
<div class="td" style="left:288px;top:557px">0,228</div>
<div class="td" style="left:336px;top:557px">0,10</div>
<div class="td" style="left:371px;top:557px;width:53px;text-align:right">12468</div>
<div class="td" style="left:432px;top:557px">0,1486</div>
<div class="a" style="left:664px;top:562px;width:12px;height:12px;border:1px solid #000"></div>
<!-- /table -->


<!-- tabs -->
<div class="a" style="left:226px;top:645px;width:112px;height:1px;background:#898c95"></div>
<div class="a" style="left:397px;top:645px;width:732px;height:1px;background:#898c95"></div>
<div class="a" style="left:234px;top:645px;width:104px;height:21px;border:1px solid #898c95;border-radius:0 0 4px 4px;background:#ececec"></div>
<div class="a" style="left:337px;top:644px;width:61px;height:25px;border:1px solid #898c95;border-top:none;border-radius:0 0 4px 4px;background:#f0f0f0"></div>
<div class="t" style="left:239px;top:650px">Основные данные</div>
<div class="t" style="left:341px;top:651px">Величины</div>

<!-- buttons -->
<div class="a" style="left:373px;top:676px;width:158px;height:25px;border:1px solid #707070;border-radius:3px;background:linear-gradient(180deg,#f2f2f2 0,#ebebeb 50%,#dddddd 51%,#cfcfcf 100%)"></div>
<div class="t" style="left:396px;top:682px;font-size:11.5px">Скрыть характеристику</div>
<div class="a" style="left:966px;top:676px;width:78px;height:25px;border:1px solid #707070;border-radius:3px;background:linear-gradient(180deg,#f2f2f2 0,#ebebeb 50%,#dddddd 51%,#cfcfcf 100%)"></div>
<div class="t" style="left:994px;top:683px"><u>З</u>акрыть</div>
<div class="a" style="left:1048px;top:676px;width:78px;height:25px;border:1px solid #707070;border-radius:3px;background:linear-gradient(180deg,#f2f2f2 0,#ebebeb 50%,#dddddd 51%,#cfcfcf 100%)"></div>
<div class="t" style="left:1076px;top:683px"><u>С</u>правка</div>

<!-- misc -->
<!-- search button -->
<div class="a" style="left:419px;top:87px;width:19px;height:19px;border:2px solid #7c7c7c;border-radius:3px;background:linear-gradient(90deg,#f4f4f4 0,#f4f4f4 1px,#dadada 2px,#e4e4e4 5px,#f6f6f6 6px)"></div>
<svg class="a" style="left:419px;top:87px" width="19" height="19">
 <line x1="2.8" y1="12.6" x2="6.5" y2="9.2" stroke="#000" stroke-width="2.4"/>
 <line x1="3.3" y1="12.1" x2="6" y2="9.7" stroke="#fff" stroke-width="0.8" stroke-dasharray="1 1"/>
 <circle cx="9.4" cy="5.3" r="3.7" fill="#cdcdcd" stroke="#000" stroke-width="1.5"/>
 <rect x="14.6" y="5.2" width="2" height="6" fill="#ff0000" stroke="#000" stroke-width="0.8"/>
 <rect x="14.5" y="1" width="2" height="2" fill="#fff"/>
 <rect x="7.6" y="11.6" width="10" height="5" fill="#d4d4d4" stroke="#000" stroke-width="1.3"/>
 <g fill="#0000ff"><rect x="9.2" y="13.2" width="1.3" height="1.3"/><rect x="11.2" y="13.2" width="1.3" height="1.3"/><rect x="13.2" y="13.2" width="1.3" height="1.3"/><rect x="15.2" y="13.2" width="1.3" height="1.3"/>
 <rect x="7.5" y="9.8" width="1.3" height="1.3"/><rect x="9.5" y="9.8" width="1.3" height="1.3"/><rect x="11.5" y="9.8" width="1.3" height="1.3"/></g>
</svg>
<!-- combo vse -->
<svg class="a" style="left:9px;top:632px" width="18" height="17">
 <path d="M2.4 7.4 L7.6 14.2 L16.4 3.4" fill="none" stroke="#a0a0a0" stroke-width="3"/>
 <path d="M1.2 5 L6.5 12 L15.2 1.4" fill="none" stroke="#00a800" stroke-width="3.4"/>
 <path d="M1.2 5 L6.5 12 L15.2 1.4" fill="none" stroke="#00ff00" stroke-width="1.3"/>
</svg>
<svg class="a" style="left:186px;top:640px" width="8" height="5"><path d="M0 0 L7 0 L3.5 4Z" fill="#000"/></svg>
<svg class="a" style="left:202px;top:633px" width="17" height="16">
 <path d="M1.5 8.5 L6 13 L15.5 3" fill="none" stroke="#a4a4a4" stroke-width="3.2"/>
 <path d="M1.5 8.5 L6 13 L15.5 3" fill="none" stroke="#c4c4c4" stroke-width="1"/>
</svg>
<!-- combo type -->
<svg class="a" style="left:9px;top:685px" width="16" height="7"><use href="#pipe"/></svg>
<svg class="a" style="left:332px;top:686px" width="8" height="5"><path d="M0 0 L7 0 L3.5 4Z" fill="#000"/></svg>
<svg class="a" style="left:347px;top:679px" width="18" height="18">
 <path d="M2.3 11 L6.3 15.3 L16.3 3.5" fill="none" stroke="#000080" stroke-width="3.2"/>
 <path d="M1.6 10 L5.7 14.4 L15.6 2.6" fill="none" stroke="#00c000" stroke-width="3.2"/>
 <path d="M1.6 9.6 L5.7 14 L15.6 2.2" fill="none" stroke="#00ff00" stroke-width="1"/>
</svg>
<!-- skryt icon -->
<svg class="a" style="left:376px;top:680px" width="18" height="16">
 <line x1="1.5" y1="14" x2="6" y2="10" stroke="#000" stroke-width="2.2"/>
 <line x1="2" y1="13.5" x2="5.5" y2="10.5" stroke="#fff" stroke-width="0.7"/>
 <rect x="5.5" y="1.8" width="10" height="8.6" rx="3" fill="none" stroke="#000" stroke-width="1.3"/>
 <path d="M5.5 1.5 L15.8 11.5 M15.8 1.5 L5.5 11.5" stroke="#800000" stroke-width="2"/>
</svg>
<!-- zakryt icon -->
<svg class="a" style="left:971px;top:679px" width="20" height="19">
 <rect x="7.2" y="1.6" width="5" height="2" fill="#00ff00" stroke="#000" stroke-width="1.2"/>
 <rect x="5.5" y="6" width="5" height="11" fill="#ff00ff"/>
 <g fill="#000"><rect x="6" y="7" width="1" height="1"/><rect x="8" y="7" width="1" height="1"/><rect x="7" y="9" width="1" height="1"/><rect x="9" y="9" width="1" height="1"/><rect x="6" y="11" width="1" height="1"/><rect x="8" y="11" width="1" height="1"/><rect x="7" y="13" width="1" height="1"/><rect x="9" y="13" width="1" height="1"/><rect x="6" y="15" width="1" height="1"/><rect x="8" y="15" width="1" height="1"/></g>
 <rect x="10.5" y="6" width="4" height="11" fill="#fff"/>
 <g fill="#00e0ff"><rect x="11" y="7" width="1" height="1"/><rect x="13" y="7" width="1" height="1"/><rect x="12" y="9" width="1" height="1"/><rect x="11" y="11" width="1" height="1"/><rect x="13" y="11" width="1" height="1"/><rect x="12" y="13" width="1" height="1"/></g>
 <path d="M1 17.5 L5.5 17.5 L5.5 5.5 L14.5 5.5 L14.5 17.5 L19 17.5" fill="none" stroke="#000080" stroke-width="1.3"/>
</svg>
<!-- help icon -->
<svg class="a" style="left:1057px;top:680px" width="14" height="19">
 <path d="M3 5 Q4 2 8 2 Q12 2 12 5 Q12 7.5 9 9.5 L7.5 12" fill="none" stroke="#000080" stroke-width="3" transform="translate(1,1)"/>
 <path d="M3 5 Q4 2 8 2 Q12 2 12 5 Q12 7.5 9 9.5 L7.5 12" fill="none" stroke="#00a0a0" stroke-width="3"/>
 <path d="M3.5 4 Q5 2.5 8 2.3" fill="none" stroke="#00ffff" stroke-width="1.2"/>
 <rect x="5.5" y="14" width="4" height="3.5" fill="#000080"/>
 <rect x="5" y="13.5" width="3.5" height="3" fill="#00b0b0"/>
</svg>
<!-- /misc -->
</body></html>
